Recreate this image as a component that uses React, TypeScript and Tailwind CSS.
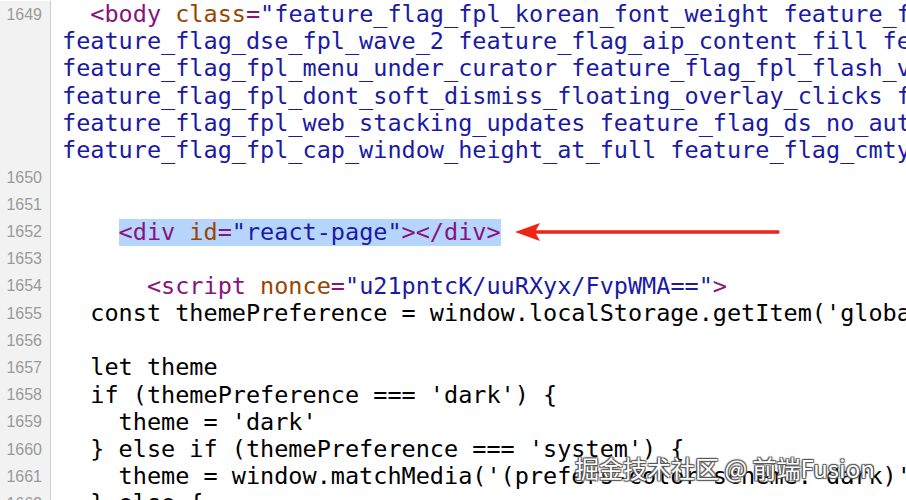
type Kind = "tag" | "attr" | "val" | "txt";
type Token = [Kind, string];
type Row = { num?: number; tokens: Token[]; mark?: boolean };

const color: Record<Kind, string> = {
  tag: "text-[#881280]",
  attr: "text-[#994500]",
  val: "text-[#1a1aa6]",
  txt: "text-black",
};

const rows: Row[] = [
  {
    num: 1649,
    tokens: [
      ["txt", "  "],
      ["tag", "<body "],
      ["attr", "class"],
      ["tag", "="],
      ["val", '"feature_flag_fpl_korean_font_weight feature_flag_fpl_'],
    ],
  },
  { tokens: [["val", "feature_flag_dse_fpl_wave_2 feature_flag_aip_content_fill feature_"]] },
  { tokens: [["val", "feature_flag_fpl_menu_under_curator feature_flag_fpl_flash_vis"]] },
  { tokens: [["val", "feature_flag_fpl_dont_soft_dismiss_floating_overlay_clicks feat"]] },
  { tokens: [["val", "feature_flag_fpl_web_stacking_updates feature_flag_ds_no_autofo"]] },
  { tokens: [["val", "feature_flag_fpl_cap_window_height_at_full feature_flag_cmty_"]] },
  { num: 1650, tokens: [] },
  { num: 1651, tokens: [] },
  {
    num: 1652,
    mark: true,
    tokens: [
      ["tag", "<div "],
      ["attr", "id"],
      ["tag", "="],
      ["val", '"react-page"'],
      ["tag", "></div>"],
    ],
  },
  { num: 1653, tokens: [] },
  {
    num: 1654,
    tokens: [
      ["txt", "      "],
      ["tag", "<script "],
      ["attr", "nonce"],
      ["tag", "="],
      ["val", '"u21pntcK/uuRXyx/FvpWMA=="'],
      ["tag", ">"],
    ],
  },
  { num: 1655, tokens: [["txt", "  const themePreference = window.localStorage.getItem('globalTheme')"]] },
  { num: 1656, tokens: [] },
  { num: 1657, tokens: [["txt", "  let theme"]] },
  { num: 1658, tokens: [["txt", "  if (themePreference === 'dark') {"]] },
  { num: 1659, tokens: [["txt", "    theme = 'dark'"]] },
  { num: 1660, tokens: [["txt", "  } else if (themePreference === 'system') {"]] },
  { num: 1661, tokens: [["txt", "    theme = window.matchMedia('(prefers-color-scheme: dark)').matches"]] },
  { num: 1662, tokens: [["txt", "  } else {"]] },
];

function Arrow() {
  return (
    <svg width="266" height="22" viewBox="0 0 266 22" className="ml-[13px] shrink-0">
      <line x1="20" y1="11" x2="264" y2="11" stroke="#ee2418" strokeWidth="3.5" strokeLinecap="round" />
      <polygon points="1,11 26,2 21,11 26,20" fill="#ee2418" />
    </svg>
  );
}

export default function App() {
  return (
    <div className="relative w-[906px] h-[500px] overflow-hidden bg-white">
      <div className="flex flex-col pt-[1px]">
        {rows.map((row, i) => (
          <div key={i} className="flex h-[27.2px] items-center">
            <div className="w-[51px] h-full shrink-0 bg-[#f2f2f2] border-r border-[#cdcdcd] flex items-center justify-end pr-[8px] font-['Liberation_Sans',sans-serif] text-[16px] text-[#9a9a9a]">
              {row.num ?? ""}
            </div>
            <div className="pl-[11px] flex items-center h-full whitespace-pre font-['DejaVu_Sans_Mono',monospace] text-[23.5px] leading-[27.2px]">
              {row.mark ? (
                <>
                  <span>{"    "}</span>
                  <span className="bg-[#b5d5fd] h-full">
                    {row.tokens.map(([k, t], j) => (
                      <span key={j} className={color[k]}>
                        {t}
                      </span>
                    ))}
                  </span>
                  <Arrow />
                </>
              ) : (
                row.tokens.map(([k, t], j) => (
                  <span key={j} className={color[k]}>
                    {t}
                  </span>
                ))
              )}
            </div>
          </div>
        ))}
      </div>

      {/* watermark */}
      <div className="absolute left-[575px] top-[453px] font-['Noto_Sans_CJK_SC','Noto_Sans',sans-serif] text-[24px] leading-[30px] text-white whitespace-nowrap [text-shadow:1px_1px_1px_#555,-1px_-1px_1px_#555,1px_-1px_1px_#555,-1px_1px_1px_#555]">
        掘金技术社区 @ 前端Fusion
      </div>
    </div>
  );
}
